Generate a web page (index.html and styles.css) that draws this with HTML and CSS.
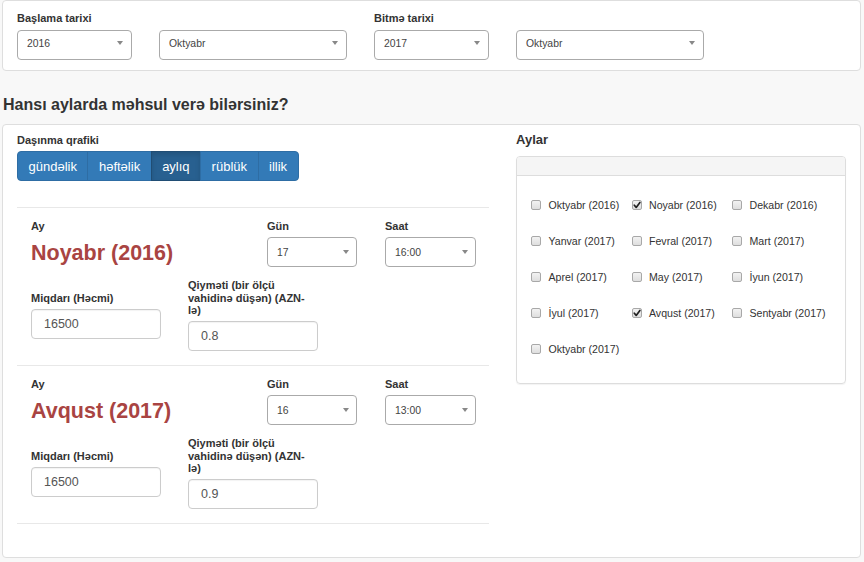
FILE: index.html
```html
<!DOCTYPE html>
<html lang="az">
<head>
<meta charset="utf-8">
<title>Məhsul</title>
<link rel="stylesheet" href="styles.css">
</head>
<body>
<div class="page">
  <section class="card top-card">
    <div class="date-group">
      <div class="lbl">Başlama tarixi</div>
      <div class="sel-row">
        <div class="sel sel-top sel-year"><span>2016</span><i class="arrow"></i></div>
        <div class="sel sel-top sel-month"><span>Oktyabr</span><i class="arrow"></i></div>
      </div>
    </div>
    <div class="date-group">
      <div class="lbl">Bitmə tarixi</div>
      <div class="sel-row">
        <div class="sel sel-top sel-year"><span>2017</span><i class="arrow"></i></div>
        <div class="sel sel-top sel-month"><span>Oktyabr</span><i class="arrow"></i></div>
      </div>
    </div>
  </section>

  <h2 class="title">Hansı aylarda məhsul verə bilərsiniz?</h2>

  <section class="card main-card">
    <div class="left">
      <div class="lbl">Daşınma qrafiki</div>
      <div class="btn-group">
        <span class="btn">gündəlik</span>
        <span class="btn">həftəlik</span>
        <span class="btn active">aylıq</span>
        <span class="btn">rüblük</span>
        <span class="btn">illik</span>
      </div>
      <div class="blocks">
        <div class="block">
          <div class="row-a">
            <div class="col-ay">
              <div class="lbl">Ay</div>
              <div class="month-name">Noyabr (2016)</div>
            </div>
            <div class="col-gun">
              <div class="lbl">Gün</div>
              <div class="sel sel-small"><span>17</span><i class="arrow"></i></div>
            </div>
            <div class="col-saat">
              <div class="lbl">Saat</div>
              <div class="sel sel-small sel-saat"><span>16:00</span><i class="arrow"></i></div>
            </div>
          </div>
          <div class="row-b">
            <div class="col-miq">
              <div class="lbl lbl-field">Miqdarı (Həcmi)</div>
              <div class="inp">16500</div>
            </div>
            <div class="col-qiy">
              <div class="lbl lbl-field lbl-wrap">Qiymәti (bir ölçü vahidinə düşən) (AZN-lə)</div>
              <div class="inp">0.8</div>
            </div>
          </div>
        </div>
        <div class="block">
          <div class="row-a">
            <div class="col-ay">
              <div class="lbl">Ay</div>
              <div class="month-name">Avqust (2017)</div>
            </div>
            <div class="col-gun">
              <div class="lbl">Gün</div>
              <div class="sel sel-small"><span>16</span><i class="arrow"></i></div>
            </div>
            <div class="col-saat">
              <div class="lbl">Saat</div>
              <div class="sel sel-small sel-saat"><span>13:00</span><i class="arrow"></i></div>
            </div>
          </div>
          <div class="row-b">
            <div class="col-miq">
              <div class="lbl lbl-field">Miqdarı (Həcmi)</div>
              <div class="inp">16500</div>
            </div>
            <div class="col-qiy">
              <div class="lbl lbl-field lbl-wrap">Qiymәti (bir ölçü vahidinə düşən) (AZN-lə)</div>
              <div class="inp">0.9</div>
            </div>
          </div>
        </div>
      </div>
    </div>

    <div class="right">
      <div class="aylar">Aylar</div>
      <div class="panel">
        <div class="panel-head"></div>
        <div class="panel-body">
          <label class="cb-item"><span class="cb"></span>Oktyabr (2016)</label>
          <label class="cb-item"><span class="cb checked"><svg viewBox="0 0 10 10" width="10" height="10"><path d="M2.3 5.2 L4.2 7.4 L7.9 2.4" fill="none" stroke="#222" stroke-width="1.7" stroke-linecap="round" stroke-linejoin="round"/></svg></span>Noyabr (2016)</label>
          <label class="cb-item"><span class="cb"></span>Dekabr (2016)</label>
          <label class="cb-item"><span class="cb"></span>Yanvar (2017)</label>
          <label class="cb-item"><span class="cb"></span>Fevral (2017)</label>
          <label class="cb-item"><span class="cb"></span>Mart (2017)</label>
          <label class="cb-item"><span class="cb"></span>Aprel (2017)</label>
          <label class="cb-item"><span class="cb"></span>May (2017)</label>
          <label class="cb-item"><span class="cb"></span>İyun (2017)</label>
          <label class="cb-item"><span class="cb"></span>İyul (2017)</label>
          <label class="cb-item"><span class="cb checked"><svg viewBox="0 0 10 10" width="10" height="10"><path d="M2.3 5.2 L4.2 7.4 L7.9 2.4" fill="none" stroke="#222" stroke-width="1.7" stroke-linecap="round" stroke-linejoin="round"/></svg></span>Avqust (2017)</label>
          <label class="cb-item"><span class="cb"></span>Sentyabr (2017)</label>
          <label class="cb-item"><span class="cb"></span>Oktyabr (2017)</label>
        </div>
      </div>
    </div>
  </section>
</div>
</body>
</html>
```

FILE: styles.css
```css
* { box-sizing: border-box; }

html, body {
  margin: 0;
  padding: 0;
  background: #f8f8f8;
}

body {
  font-family: "Liberation Sans", Arial, sans-serif;
  color: #333;
}

.page {
  padding: 0 3px 0 2px;
}

.card {
  background: #fff;
  border: 1px solid #dedede;
  border-radius: 4px;
}

.lbl {
  font-size: 11px;
  font-weight: bold;
  line-height: 14px;
  color: #333;
  margin-bottom: 4px;
}

/* top card */
.top-card {
  display: flex;
  gap: 27px;
  padding: 10px 14px 10px 14px;
  height: 71px;
}

.top-card .lbl {
  margin-bottom: 5px;
}

.sel-row {
  display: flex;
  gap: 27px;
}

.sel {
  display: flex;
  align-items: center;
  justify-content: space-between;
  height: 30px;
  border: 1px solid #aaa;
  border-radius: 4px;
  background: #fff;
  padding: 0 8px 0 9px;
  font-size: 10.4px;
  color: #444;
}

.sel-top {
  padding-bottom: 4px;
}

.sel-year { width: 115px; }
.sel-month { width: 188px; }

.arrow {
  width: 0;
  height: 0;
  border-style: solid;
  border-width: 4px 3.5px 0 3.5px;
  border-color: #888 transparent transparent transparent;
}

/* heading */
.title {
  margin: 24px 0 9px 0;
  padding-left: 1px;
  font-size: 16px;
  line-height: 20px;
  font-weight: bold;
  color: #333;
}

/* main card */
.main-card {
  display: flex;
  gap: 27px;
  height: 434px;
  padding: 8px 14px 0 14px;
}

.left {
  width: 472px;
  flex: none;
}

.btn-group {
  display: flex;
  height: 30px;
}

.btn {
  display: flex;
  align-items: center;
  height: 30px;
  padding: 0 10.5px;
  background: #337ab7;
  border: 1px solid #2e6da4;
  color: #fff;
  font-size: 13px;
  margin-left: -1px;
}

.btn:first-child {
  margin-left: 0;
  border-radius: 4px 0 0 4px;
}

.btn:last-child {
  border-radius: 0 4px 4px 0;
}

.btn.active {
  background: #286090;
  border-color: #204d74;
  box-shadow: inset 0 3px 5px rgba(0, 0, 0, 0.125);
}

.blocks {
  margin-top: 26px;
  border-bottom: 1px solid #e8e8e8;
}

.block {
  border-top: 1px solid #e8e8e8;
  padding: 11px 13px 14px 14px;
  height: 158px;
}

.row-a {
  display: flex;
}

.col-ay { width: 236px; }
.col-gun { width: 118px; }
.col-saat { width: 91px; }

.sel-small {
  width: 90px;
  padding-right: 7px;
}

.sel-saat { width: 91px; }

.month-name {
  margin-top: 8px;
  font-size: 21.5px;
  line-height: 24px;
  font-weight: bold;
  color: #a94442;
}

.row-b {
  display: flex;
  margin-top: 12px;
}

.col-miq {
  width: 157px;
  padding-top: 12.5px;
}

.col-qiy {
  width: 130px;
}

.lbl-field {
  line-height: 12.5px;
  margin-bottom: 4.5px;
}

.lbl-wrap {
  width: 125px;
}

.inp {
  display: flex;
  align-items: center;
  width: 130px;
  height: 30px;
  border: 1px solid #ccc;
  border-radius: 4px;
  padding-left: 12px;
  font-size: 12.5px;
  color: #555;
  box-shadow: inset 0 1px 1px rgba(0, 0, 0, 0.05);
}

/* right column */
.right {
  width: 330px;
  flex: none;
  margin-top: -1.5px;
}

.aylar {
  font-size: 13px;
  font-weight: bold;
  line-height: 16px;
  color: #333;
  margin-bottom: 8.5px;
}

.panel {
  border: 1px solid #ddd;
  border-radius: 4px;
  box-shadow: 0 1px 1px rgba(0, 0, 0, 0.05);
  height: 228px;
  overflow: hidden;
}

.panel-head {
  height: 19px;
  background: #f5f5f5;
  border-bottom: 1px solid #ddd;
}

.panel-body {
  display: grid;
  grid-template-columns: 100.5px 100.5px 100.5px;
  grid-auto-rows: 36px;
  padding: 11px 14px 0 14px;
}

.cb-item {
  display: flex;
  align-items: center;
  font-size: 10.6px;
  color: #333;
  white-space: nowrap;
}

.cb {
  display: block;
  width: 10px;
  height: 10px;
  margin-right: 7.5px;
  border: 1px solid #a8a8a8;
  border-radius: 2px;
  background: linear-gradient(#f2f2f2, #dedede);
  flex: none;
}

.cb svg {
  display: block;
  margin: -1px 0 0 -1px;
}
```
